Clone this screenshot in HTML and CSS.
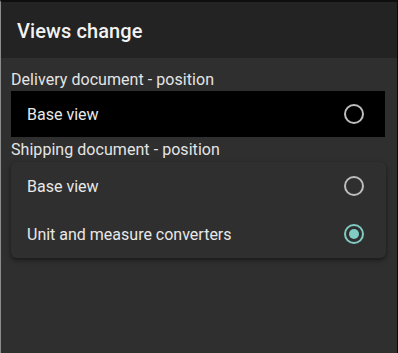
FILE: index.html
```html
<!DOCTYPE html>
<html>
<head>
<meta charset="utf-8">
<link rel="stylesheet" href="styles.css">
</head>
<body>
<div class="frame">
  <header class="topbar"><h1 class="title">Views change</h1></header>
  <main class="content">
    <div class="section-label first">Delivery document - position</div>
    <div class="row row-black">
      <span class="row-text">Base view</span>
      <span class="radio"></span>
    </div>
    <div class="section-label second">Shipping document - position</div>
    <div class="card">
      <div class="row">
        <span class="row-text">Base view</span>
        <span class="radio"></span>
      </div>
      <div class="row">
        <span class="row-text">Unit and measure converters</span>
        <span class="radio checked"></span>
      </div>
    </div>
  </main>
</div>
</body>
</html>
```
FILE: styles.css
```css
html, body {
  margin: 0;
  padding: 0;
  background: #2f2f2f;
}
body {
  font-family: Roboto, "Liberation Sans", sans-serif;
}
.frame {
  width: 398px;
  height: 353px;
  box-sizing: border-box;
  border-top: 2px solid #0e0e0e;
  border-left: 1px solid #8c8c8c;
  border-right: 1px solid #0a0a0a;
  background: #2f2f2f;
  display: flex;
  flex-direction: column;
  overflow: hidden;
}
.topbar {
  height: 56px;
  background: #232323;
  display: flex;
  align-items: center;
  padding-left: 16px;
  padding-top: 1px;
  box-sizing: border-box;
  flex-shrink: 0;
}
.title {
  margin: 0;
  font-size: 20px;
  font-weight: 500;
  color: #f2f2f2;
  letter-spacing: 0.1px;
}
.content {
  padding: 10px 11px 0 10px;
  display: flex;
  flex-direction: column;
}
.section-label {
  font-size: 16px;
  line-height: 23px;
  color: #e4e4e4;
  letter-spacing: 0.05px;
}
.section-label.second {
  line-height: 24px;
  padding-top: 1px;
}
.row {
  display: flex;
  align-items: center;
  justify-content: space-between;
  height: 48px;
  padding: 0 21px 0 16px;
}
.row-black {
  background: #000;
  height: 46px;
  margin-right: 1px;
  padding-left: 16px;
  padding-right: 21px;
}
.row-text {
  font-size: 16px;
  color: #e8e8e8;
}
.card {
  border-radius: 6px;
  background: #2f2f2f;
  box-shadow: 0 2px 5px rgba(0,0,0,0.5);
}
.card .row {
  height: 48px;
  padding-left: 16px;
  padding-right: 22px;
}
.radio {
  width: 16px;
  height: 16px;
  border: 2px solid #bdbdbd;
  border-radius: 50%;
  box-sizing: content-box;
  position: relative;
  flex-shrink: 0;
}
.radio.checked {
  border-color: #80cbc4;
}
.radio.checked::after {
  content: "";
  position: absolute;
  left: 3px;
  top: 3px;
  width: 10px;
  height: 10px;
  border-radius: 50%;
  background: #80cbc4;
}
```
